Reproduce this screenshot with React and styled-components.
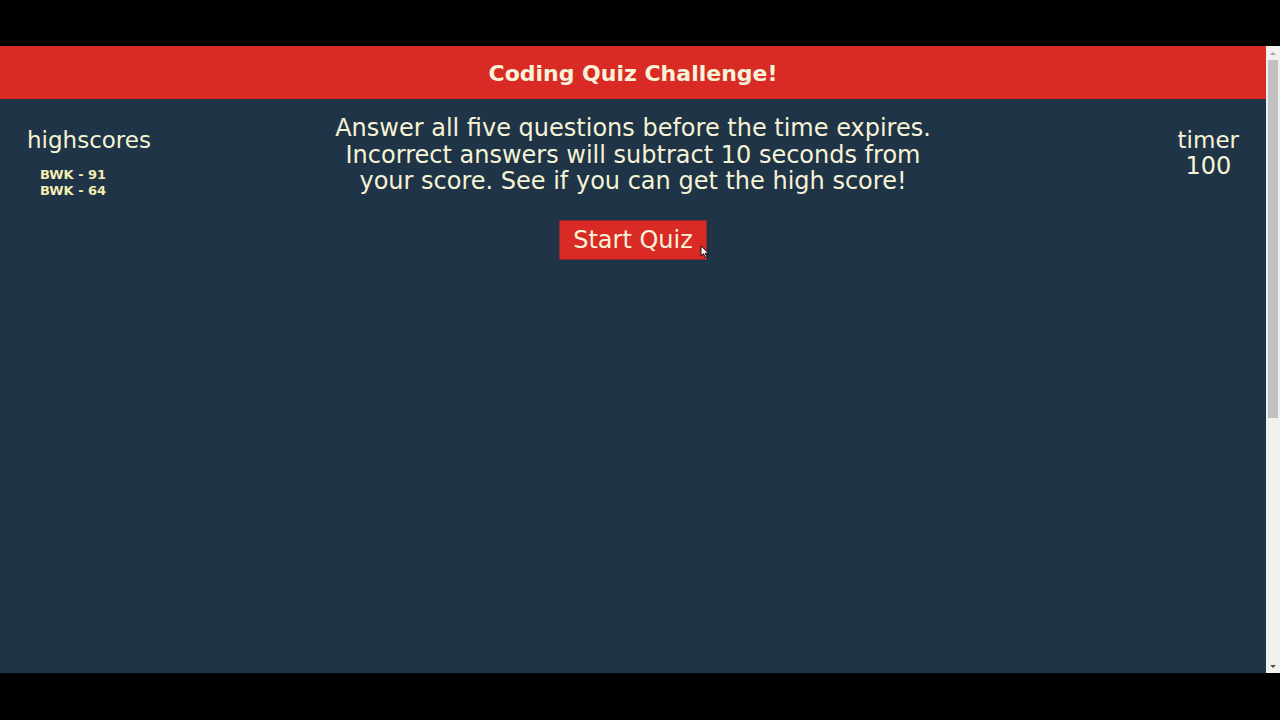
import React from "react";
import styled, { createGlobalStyle } from "styled-components";

const GlobalStyle = createGlobalStyle`
  html, body {
    margin: 0;
    padding: 0;
    background: #000;
  }
  body {
    font-family: "DejaVu Sans", Verdana, sans-serif;
  }
`;

const highscores = [
  { name: "BWK", score: 91 },
  { name: "BWK", score: 64 },
];

const App = () => {
  return (
    <>
      <GlobalStyle />
      <Frame>
        <Letterbox />
        <Viewport>
          <Page>
            <Header>Coding Quiz Challenge!</Header>
            <Main>
              <ScoresColumn>
                <ColumnTitle>highscores</ColumnTitle>
                <ScoreList>
                  {highscores.map((s, i) => (
                    <ScoreItem key={i}>
                      {s.name} - {s.score}
                    </ScoreItem>
                  ))}
                </ScoreList>
              </ScoresColumn>
              <Center>
                <Intro>
                  Answer all five questions before the time expires.
                  <br />
                  Incorrect answers will subtract 10 seconds from
                  <br />
                  your score. See if you can get the high score!
                </Intro>
                <ButtonWrap>
                  <StartButton>Start Quiz</StartButton>
                  <Cursor viewBox="0 0 10 14">
                    <path
                      d="M1 1 L1 11 L3.5 8.6 L5.2 12.5 L6.8 11.8 L5.2 8.2 L8.6 8.2 Z"
                      fill="#fff"
                      stroke="#000"
                      strokeWidth="0.9"
                    />
                  </Cursor>
                </ButtonWrap>
              </Center>
              <TimerColumn>
                <ColumnTitle>timer</ColumnTitle>
                <TimerValue>100</TimerValue>
              </TimerColumn>
            </Main>
          </Page>
          <Scrollbar>
            <Arrow up />
            <Track>
              <Thumb />
            </Track>
            <Arrow />
          </Scrollbar>
        </Viewport>
        <Letterbox bottom />
      </Frame>
    </>
  );
};

const Frame = styled.div`
  width: 1280px;
  height: 720px;
  display: flex;
  flex-direction: column;
  background: #000;
  overflow: hidden;
`;

const Letterbox = styled.div`
  height: ${({ bottom }) => (bottom ? "47px" : "46px")};
  background: #000;
  flex-shrink: 0;
`;

const Viewport = styled.div`
  height: 627px;
  display: flex;
`;

const Page = styled.div`
  flex: 1;
  background: #1f3446;
  display: flex;
  flex-direction: column;
`;

const Header = styled.header`
  height: 53px;
  background: #da2a26;
  color: #f7f3d8;
  font-weight: bold;
  font-size: 22px;
  display: flex;
  align-items: center;
  justify-content: center;
  padding-top: 1px;
  box-sizing: border-box;
`;

const Main = styled.main`
  display: grid;
  grid-template-columns: 1fr 680px 1fr;
  color: #f6f3d6;
`;

const ScoresColumn = styled.div`
  padding: 28px 0 0 27px;
`;

const ColumnTitle = styled.div`
  font-size: 23px;
  line-height: 27px;
`;

const ScoreList = styled.ul`
  list-style: none;
  margin: 13px 0 0 13px;
  padding: 0;
`;

const ScoreItem = styled.li`
  font-size: 13px;
  line-height: 16px;
  font-weight: bold;
  color: #f3efb4;
`;

const Center = styled.div`
  display: flex;
  flex-direction: column;
  align-items: center;
  padding-top: 16px;
`;

const Intro = styled.p`
  margin: 0;
  font-size: 24px;
  line-height: 26.5px;
  text-align: center;
`;

const ButtonWrap = styled.div`
  position: relative;
  margin-top: 25px;
`;

const StartButton = styled.button`
  background: #da2a26;
  color: #f7f3d8;
  border: 1px solid #8a2a35;
  font-family: inherit;
  font-size: 24px;
  padding: 0 13px;
  height: 40px;
  cursor: pointer;
`;

const Cursor = styled.svg`
  position: absolute;
  left: 141px;
  top: 25px;
  width: 10px;
  height: 14px;
`;

const TimerColumn = styled.div`
  justify-self: end;
  padding: 28px 27px 0 0;
  text-align: center;
`;

const TimerValue = styled.div`
  font-size: 24px;
  line-height: 25px;
`;

const Scrollbar = styled.div`
  width: 14px;
  background: #f1f1ef;
  display: flex;
  flex-direction: column;
`;

const Arrow = styled.div`
  height: 14px;
  display: flex;
  align-items: center;
  justify-content: center;
  &::after {
    content: "";
    border-left: 3px solid transparent;
    border-right: 3px solid transparent;
    ${({ up }) =>
      up ? "border-bottom: 3px solid #a3a3a3;" : "border-top: 3px solid #505050;"}
  }
`;

const Track = styled.div`
  flex: 1;
  padding: 0 2px;
`;

const Thumb = styled.div`
  height: 358px;
  background: #c1c1c1;
`;

export default App;
